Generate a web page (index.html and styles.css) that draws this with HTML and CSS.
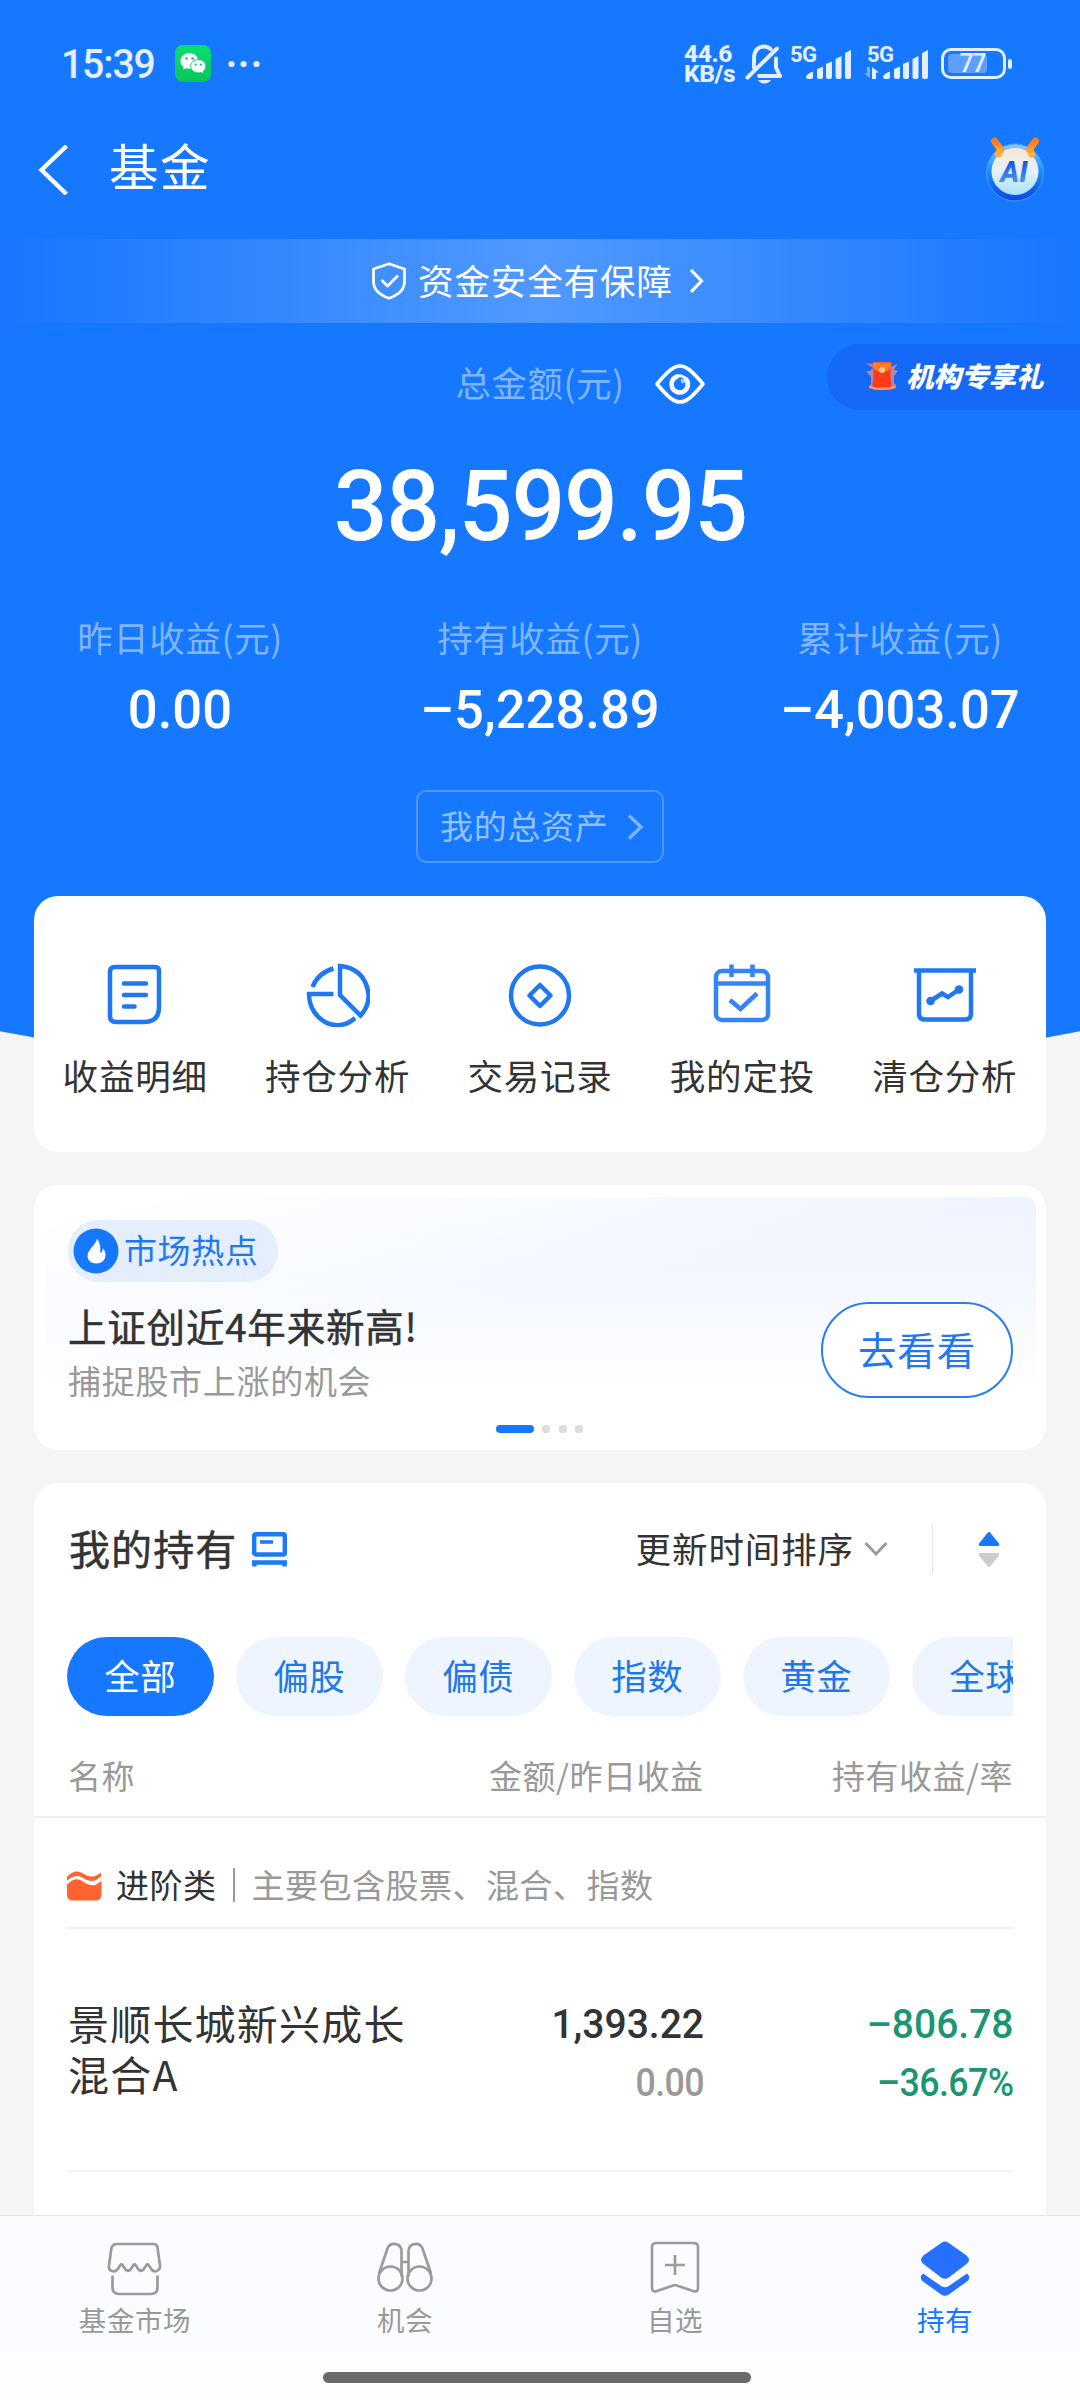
FILE: index.html
```html
<!DOCTYPE html>
<html lang="zh-CN">
<head>
<meta charset="utf-8">
<title>基金</title>
<link rel="stylesheet" href="styles.css">
</head>
<body>
<div class="page">
  <div class="content">
    <header class="status">
      <span class="clock">15:39</span>
      <svg class="wechat" width="36" height="37" viewBox="0 0 36 37">
        <defs><linearGradient id="wx" x1="0" y1="0" x2="0" y2="1"><stop offset="0" stop-color="#06e06f"/><stop offset="1" stop-color="#08c45c"/></linearGradient></defs>
        <rect width="36" height="37" rx="8" fill="url(#wx)"/>
        <path fill="#fff" d="M14.5 8C9.500 8 5.500 11.500 5.500 16c0 2.500 1.200 4.600 3.200 6l-.6 2.600 3.200-1.400c1 .3 2 .5 3.200.5 5 0 9-3.500 9-7.700S19.500 8 14.500 8z"/>
        <path fill="#fff" stroke="#07d065" stroke-width="1" d="M23.300 14.500c-4.300 0-7.600 3-7.600 6.700s3.300 6.700 7.600 6.700c1 0 1.900-.1 2.700-.4l2.600 1.300-.5-2.300c1.700-1.200 2.800-3.100 2.800-5.300 0-3.700-3.300-6.700-7.600-6.700z"/>
        <g fill="#07c860"><circle cx="11.500" cy="13.500" r="1.300"/><circle cx="17.600" cy="13.500" r="1.300"/><circle cx="20.600" cy="19.600" r="1.100"/><circle cx="25.800" cy="19.600" r="1.100"/></g>
      </svg>
      <svg class="more" width="32" height="8" viewBox="0 0 32 8" fill="#e3efff"><circle cx="3.500" cy="4" r="3.100"/><circle cx="15.600" cy="4" r="3.100"/><circle cx="28.500" cy="4" r="3.100"/></svg>
      <span class="speed"><span>44.6</span><span>KB/s</span></span>
      <svg class="bell" width="38" height="41" viewBox="0 0 38 41" fill="none" stroke="#e3efff" stroke-width="4" stroke-linecap="round" stroke-linejoin="round">
        <path d="M2.500 34.500L32 5.500"/><path d="M9 24.500V15C9 7.500 13.500 3.500 19 3.500c2.800 0 5 1 6.500 2.500"/><path d="M31 15.500v9l4 8.500H14"/>
        <path d="M13 37h13c-1.500 2.300-3.600 3.500-6.500 3.500S14.500 39.300 13 37z" fill="#e3efff" stroke="none"/>
      </svg>
      <span class="signal">
        <span class="net">5G</span>
        <svg width="46" height="30" viewBox="0 0 46 30" fill="#e3efff"><path d="M0 27q0-3 7-5.500V27q0 2-2 2H2q-2 0-2-2zM11 19l6-2.500V27q0 2-2 2h-2q-2 0-2-2zM20 14l6-2.500V27q0 2-2 2h-2q-2 0-2-2zM29.500 9l6-3v21q0 2-2 2h-2q-2 0-2-2zM39 3l6-3v27q0 2-2 2h-2q-2 0-2-2z"/></svg>
      </span>
      <span class="signal signal-two">
        <span class="net">5G</span>
        <svg class="updown" width="16" height="12" viewBox="0 0 16 12"><path d="M6 0v11L0 6h3V0z" fill="#79b1ff"/><path d="M8 12V0l7 5.500h-3V12z" fill="#e3efff"/></svg>
        <svg width="46" height="30" viewBox="0 0 46 30" fill="#e3efff"><path d="M0 27q0-3 7-5.500V27q0 2-2 2H2q-2 0-2-2zM11 19l6-2.500V27q0 2-2 2h-2q-2 0-2-2zM20 14l6-2.500V27q0 2-2 2h-2q-2 0-2-2zM29.500 9l6-3v21q0 2-2 2h-2q-2 0-2-2zM39 3l6-3v27q0 2-2 2h-2q-2 0-2-2z"/></svg>
      </span>
      <span class="battery"><span class="level">77</span></span>
      <span class="battery-tip"></span>
    </header>

    <nav class="nav">
      <svg class="back" width="30" height="50" viewBox="0 0 30 50" fill="none" stroke="#fff" stroke-width="4.400"><path d="M28.500 1L3.500 25l25 24"/></svg>
      <h1>基金</h1>
      <svg class="ai" width="60" height="66" viewBox="0 0 60 66">
        <defs>
          <linearGradient id="ring" x1="0" y1="0" x2="0" y2="1"><stop offset="0" stop-color="#8bd0ff"/><stop offset=".45" stop-color="#1e92f5"/><stop offset="1" stop-color="#0b44e8"/></linearGradient>
          <linearGradient id="face" x1="0" y1="0" x2="0" y2="1"><stop offset="0" stop-color="#fbe6cf"/><stop offset=".5" stop-color="#e6f1fb"/><stop offset="1" stop-color="#a5e2fb"/></linearGradient>
          <linearGradient id="horn" x1="0" y1="0" x2="0" y2="1"><stop offset="0" stop-color="#ff7a10"/><stop offset="1" stop-color="#ffb23c"/></linearGradient>
          <linearGradient id="ink" x1="0" y1="0" x2="0" y2="1"><stop offset=".2" stop-color="#1558e0"/><stop offset="1" stop-color="#58a8f5"/></linearGradient>
        </defs>
        <circle cx="30" cy="35.500" r="28.500" fill="url(#ring)" stroke="#4b9cff" stroke-width="1"/>
        <circle cx="30" cy="34.500" r="23.500" fill="url(#face)"/>
        <path d="M9.500 4l6 8.500L13.500 17M50.500 4l-6 8.500L46.500 17" fill="none" stroke="url(#horn)" stroke-width="7" stroke-linecap="round" stroke-linejoin="round"/>
        <text x="29" y="45" class="ai-text" fill="url(#ink)">AI</text>
      </svg>
    </nav>

    <div class="safety">
      <svg width="36" height="38" viewBox="0 0 36 38" fill="none" stroke="#fff" stroke-width="2.800" stroke-linejoin="round"><path d="M18 1.700L33.500 7v12.500c0 7.500-6 13.500-15.500 16.800C8.500 33 2.500 27 2.500 19.500V7z"/><path d="M10.500 18l6 6L27 13.500"/></svg>
      <span>资金安全有保障</span>
      <svg class="arrow" width="15" height="26" viewBox="0 0 15 26" fill="none" stroke="#fff" stroke-width="3.200"><path d="M2 2l10.500 11L2 24"/></svg>
    </div>

    <div class="total">
      <span class="total-label">总金额(元)</span>
      <div class="total-side">
        <svg class="eye" width="50" height="40" viewBox="0 0 50 40" fill="none" stroke="#fff" stroke-width="3.600" stroke-linejoin="round"><path d="M2 20C7 14 11.500 9 16 5.500Q25 -1.500 34 5.500C38.500 9 43 14 48 20 43 26 38.500 31 34 34.500Q25 41.500 16 34.500C11.500 31 7 26 2 20z"/><path d="M22 12.500a8.200 8.200 0 1 0 9.500 3.200" stroke-width="4.600" stroke-linecap="round"/><path d="M22 12.200a8.200 8.200 0 0 1 9.500 3.500" stroke-width="3"/><circle cx="28" cy="17" r="2.400" fill="#fff" stroke="none" opacity=".6"/></svg>
        <div class="gift">
          <svg width="34" height="30" viewBox="0 0 34 30"><path d="M1 2l7 5-3 3-4 0 5 6v7l-2 2v2l6 2h15l6-2v-3l-2-2v-7l4-5-4-1 3-6-6 3z" fill="#d8909a" opacity=".8"/><path d="M9 1h16q2 0 1.500 3-2 9 0 19 0 3-2 3H9.500q-2.500 0-2-3 2-10 0-19Q7 1 9 1z" fill="#ff3a1a"/><path d="M8 1.500h18q2 8.500-9 9.500-11-1-9-9.500z" fill="#ff7d2c"/><circle cx="17" cy="9" r="3" fill="#ffc587"/><path d="M4 25q13 4 26 0v2q-13 4-26 0z" fill="#ff9466"/></svg>
          <span>机构专享礼</span>
        </div>
      </div>
    </div>

    <div class="amount"><span>38,599.95</span></div>

    <div class="stats">
      <div><span class="stat-label">昨日收益(元)</span><span class="stat-value">0.00</span></div>
      <div><span class="stat-label">持有收益(元)</span><span class="stat-value">–5,228.89</span></div>
      <div><span class="stat-label">累计收益(元)</span><span class="stat-value">–4,003.07</span></div>
    </div>

    <div class="assets">
      <span>我的总资产</span>
      <svg width="17" height="26" viewBox="0 0 17 26" fill="none" stroke="#80b5ff" stroke-width="3.400"><path d="M2 1.500L14 13 2 24.500"/></svg>
    </div>

    <section class="card menu">
      <div>
        <svg width="64" height="64" viewBox="0 0 64 64"><path d="M12 4h40q4 0 4 4v36q0 15-15 15H13q-6 0-6-6V9q0-5 5-5z"/><path d="M21 20.500h22M21 32h22M21 43.500h10.500" stroke-linecap="round"/></svg>
        <span>收益明细</span>
      </div>
      <div>
        <svg width="64" height="64" viewBox="0 0 64 64"><path d="M34 3v29l20.500 20.500C63.500 42.500 64.500 31 59.500 20 55 10 45.500 4 34 3z"/><path d="M27.500 5.500C17 8.500 10 15 6.500 24M27.500 31H3c0 14 8 24.500 19 29.500 9 3 19 2 27-5.500"/></svg>
        <span>持仓分析</span>
      </div>
      <div>
        <svg width="64" height="64" viewBox="0 0 64 64"><circle cx="32" cy="32.500" r="29"/><path d="M32 22L42.500 32.500 32 43 21.500 32.500z" stroke-linejoin="round"/></svg>
        <span>交易记录</span>
      </div>
      <div class="plan">
        <svg width="64" height="64" viewBox="0 0 64 64"><rect x="6" y="8" width="52" height="49" rx="6"/><path d="M6 20.500h52M21.500 1.500v12.500M42.500 1.500v12.500M20 37l10.500 9L47 30.500"/></svg>
        <span>我的定投</span>
      </div>
      <div>
        <svg width="64" height="64" viewBox="0 0 64 64"><path d="M1 7.500h62M6 7.500v43q0 6 6 6h40q6 0 6-6v-43"/><path d="M17.500 38l11.500-7.500 6 3.500 11-7.500"/><circle cx="17.500" cy="38" r="4.300" class="dot"/><circle cx="46" cy="26.500" r="4.300" class="dot"/></svg>
        <span>清仓分析</span>
      </div>
    </section>

    <section class="card promo">
      <div class="promo-body">
        <div class="promo-text">
          <div class="hot">
            <svg width="46" height="46" viewBox="0 0 46 46"><circle cx="23" cy="23" r="22.500" fill="#1677ff"/><path d="M24 10.500c-.5 6-9.500 11-9.500 17.500 0 4.500 3.500 7.500 9 7.500s9-3.500 9-9c0-2.500-1-4.500-2.500-6-.3 2-1.200 3.500-3 4.500C28 19.500 27 14.500 24 10.500z" fill="#fff"/></svg>
            <span>市场热点</span>
          </div>
          <h2>上证创近4年来新高!</h2>
          <p>捕捉股市上涨的机会</p>
        </div>
        <div class="go">去看看</div>
      </div>
      <div class="pager"><i class="on"></i><i></i><i></i><i></i></div>
    </section>

    <section class="card holdings">
      <div class="head">
        <h2>我的持有</h2>
        <svg class="screen" width="35" height="35" viewBox="0 0 35 35" fill="none" stroke="#1a7af8" stroke-width="4.400"><rect x="2.200" y="2.200" width="30.600" height="20.300" rx="1.500"/><path d="M8 10h13" stroke-width="3.600"/><path d="M0 30.500h35M2.500 28.500v6M32.500 28.500v6"/></svg>
        <span class="sort">更新时间排序</span>
        <svg class="down" width="24" height="16" viewBox="0 0 24 16" fill="none" stroke="#999" stroke-width="2.800"><path d="M1.500 2L12 13 22.500 2"/></svg>
        <span class="rule"></span>
        <svg class="tri" width="22" height="35" viewBox="0 0 22 35"><path d="M11 0q.8 0 1.500.9l8.500 10.600q1 2.500-1.500 2.500h-17Q0 14 1 11.500L9.500.9Q10.200 0 11 0z" fill="#1677ff"/><path d="M11 35q.8 0 1.500-.9L21 23.500q1-2.500-1.500-2.500h-17Q0 21 1 23.500l8.500 10.600q.7.900 1.500.9z" fill="#ccc"/></svg>
      </div>
      <div class="chips"><span class="active">全部</span><span>偏股</span><span>偏债</span><span>指数</span><span>黄金</span><span>全球</span></div>
      <div class="cols labels"><span>名称</span><span>金额/昨日收益</span><span>持有收益/率</span></div>
      <div class="group">
        <svg width="35" height="31" viewBox="0 0 36 31"><path d="M0 14.500C7 8 11 7.500 18 12.500c6 4 11 4 17.500-2V25q0 6-6 6H6q-6 0-6-6z" fill="#ff6430"/><path d="M0 6.500C7-.5 12 0 18 4c6 3.500 11 3 17-2v4c-6 6-11.500 6-18 2C11.500 4.500 7 4.500 0 10.500z" fill="#ff6430"/></svg>
        <b>进阶类</b><i></i><span>主要包含股票、混合、指数</span>
      </div>
      <div class="cols fund">
        <span class="name">景顺长城新兴成长混合A</span>
        <span class="num"><b>1,393.22</b><em>0.00</em></span>
        <span class="num loss"><b>–806.78</b><em>–36.67%</em></span>
      </div>
    </section>
  </div>

  <footer class="tabs">
    <div class="tab-row">
      <div>
        <svg width="56" height="58" viewBox="0 0 56 58"><path d="M9.500 4h37q3.500 0 4 3.500l2.500 18c.5 5.500-5.500 7.500-8.500 4l-3-4.500q-1-1.500-2 0l-3 4.500q-2.500 2.500-5 0l-3-4.500q-1-1.500-2 0l-3 4.500q-2.500 2.500-5 0l-3-4.500q-1-1.500-2 0l-3 4.500c-3.500 3.500-9.500 1.500-8.500-4l2.500-18Q6 4 9.500 4z" stroke-linejoin="round"/><path d="M5.500 35.500v12q0 6.500 6.500 6.500h32q6.500 0 6.500-6.500v-12"/></svg>
        <span>基金市场</span>
      </div>
      <div>
        <svg width="56" height="58" viewBox="0 0 56 58"><circle cx="13.500" cy="38.500" r="12"/><circle cx="42.500" cy="38.500" r="12"/><path d="M2 33.500L10.500 8.500c3-7 13.500-5.500 14 2v26M54 33.500L45.500 8.500c-3-7-13.500-5.500-14 2v26M24.500 22h7"/></svg>
        <span>机会</span>
      </div>
      <div>
        <svg width="56" height="58" viewBox="0 0 56 58"><path d="M9.500 3h37q4.500 0 4.500 4V48c0 3.500-2.500 4-5 3L29 45.200q-1-.3-2 0L10 51C7.500 52 5 51.500 5 48V7q0-4 4.500-4z"/><path d="M28 15v20M18 25h20"/></svg>
        <span>自选</span>
      </div>
      <div class="current">
        <svg width="56" height="58" viewBox="0 0 56 58"><path d="M24.500 2.700Q28 .5 31.500 2.700L49.500 15.500q5 4.500 0 8.500L31.500 37.700Q28 40 24.500 37.700L6.500 24q-5-4 0-8.500z"/><path d="M6 33.500l18.500 12.700q3.500 2 7 0L50 33.500q4.500 4 0 8L31.500 54.700q-3.500 2.300-7 0L6 41.500q-4.500-4 0-8z"/></svg>
        <span>持有</span>
      </div>
    </div>
    <div class="home"></div>
  </footer>
</div>
</body>
</html>
```
FILE: styles.css
```css
* { box-sizing: border-box; margin: 0; padding: 0; }
body { width: 1080px; height: 2400px; overflow: hidden; background: #f5f5f5; color: #333; font-family: "Noto Sans CJK SC", sans-serif; font-weight: 400; }
svg { display: block; flex: none; }
h1, h2, b { font-weight: 400; }
i, em { font-style: normal; }
span, b, h1, h2, p { white-space: nowrap; }

.page { position: relative; display: flex; flex-direction: column; height: 2400px; isolation: isolate; }
.page::before { content: ""; position: absolute; inset: 0 0 auto; height: 1090px; z-index: -1; background: #1677ff; clip-path: circle(2840px at 540px -1757px); }
.content { flex: 1; min-height: 0; overflow: hidden; }

/* status bar */
.status { display: flex; align-items: center; height: 127px; padding-left: 61px; color: #e3efff; font-family: Roboto, sans-serif; }
.clock { width: 114px; font-size: 41px; font-weight: 500; letter-spacing: -1.2px; transform: scaleX(.955); transform-origin: left; }
.more { margin-left: 17px; }
.speed { display: flex; flex-direction: column; width: 51px; margin-left: 424px; font-size: 24.500px; line-height: 20px; font-weight: 800; letter-spacing: -.4px; }
.bell { margin-left: 10px; }
.signal { display: flex; align-items: flex-end; width: 62px; height: 33px; margin: -1px 0 0 7px; }
.signal .net { align-self: flex-start; width: 16px; font-size: 22px; line-height: 16px; font-weight: 700; letter-spacing: -.5px; }
.signal-two { width: 62px; margin-left: 14px; }
.signal-two .net { width: 0; margin-left: 1px; }
.signal-two .updown { margin: 0 3px 1px -3px; }
.battery { display: flex; width: 65px; height: 31px; margin-left: 13px; padding: 3px 4px; border: 3px solid #e3efff; border-radius: 10px; }
.level { width: 39px; border-radius: 4px; background: #5c9fff; font-size: 25px; line-height: 19px; font-weight: 500; text-align: right; padding-right: 2px; letter-spacing: -1.500px; }
.battery-tip { width: 4px; height: 10px; margin-left: 2px; border-radius: 2px; background: #e3efff; }

.nav { display: flex; align-items: center; height: 86px; padding: 0 35px 0 38px; color: #fff; }
.nav h1 { flex: 1; margin: -10px 0 0 41px; font-size: 49.500px; line-height: 70px; letter-spacing: 1.500px; }
.ai-text { font: italic 800 29px Roboto, sans-serif; text-anchor: middle; }

.safety { display: flex; align-items: center; height: 84px; margin-top: 26px; padding-left: 371px; background: linear-gradient(90deg, transparent, rgba(255,255,255,.25) 50%, transparent); color: #fff; font-size: 35.500px; letter-spacing: .9px; }
.safety span { margin: -4px 0 0 11px; }
.safety .arrow { margin-left: 16px; }

.total { display: grid; grid-template-columns: 1fr auto 1fr; height: 66px; margin-top: 21px; }
.total-label { grid-column: 2; padding-top: 12px; line-height: 52px; font-size: 35.500px; letter-spacing: .5px; color: #80b5ff; }
.total-side { display: flex; justify-content: space-between; }
.eye { margin: 20px 0 0 30px; }
.gift { display: flex; align-items: center; width: 253px; padding: 0 0 2px 38px; border-radius: 33px 0 0 33px; background: #1668f6; color: #fff; }
.gift span { margin: -2px 0 0 7px; font-size: 27.500px; font-weight: 800; font-style: italic; }

.amount { height: 110px; margin-top: 42px; text-align: center; color: #fff; font: 500 98px/110px Roboto, sans-serif; letter-spacing: -1.300px; }
.amount span { display: inline-block; transform: translateX(.6px) scaleX(.967); }

.stats { display: grid; grid-template-columns: repeat(3, 1fr); margin-top: 50px; text-align: center; color: #fff; }
.stats div { display: flex; flex-direction: column; }
.stat-label { line-height: 50px; font-size: 35.500px; letter-spacing: .6px; color: #80b5ff; }
.stat-value { margin-top: 17px; font: 500 54.500px/60px Roboto, sans-serif; transform: scaleX(.965); }

.assets { display: flex; align-items: center; width: 248px; height: 73px; margin: 51px auto 0; padding-left: 22px; border: 2px solid #5098ff; border-radius: 10px; font-size: 33px; letter-spacing: .7px; color: #94c1ff; }
.assets span { margin-top: -4px; }
.assets svg { margin-left: 18px; }

.card { margin: 33px 34px 0; border-radius: 24px; background: #fff; }
.menu { display: grid; grid-template-columns: repeat(5, 1fr); height: 256px; margin-top: 33px; padding-top: 67px; }
.menu div { display: flex; flex-direction: column; align-items: center; }
.menu svg { fill: none; stroke: #1f78f2; stroke-width: 4.500px; }
.menu .plan svg { stroke: #3484f8; }
.menu .dot { fill: #1f78f2; stroke: none; }
.menu span { margin-top: 23px; font-size: 35.500px; line-height: 50px; letter-spacing: .8px; }

.promo { display: flex; flex-direction: column; height: 265px; padding: 12px 10px 0 12px; }
.promo-body { display: flex; justify-content: space-between; height: 215px; padding: 23px 23px 0 22px; border-radius: 10px; background: linear-gradient(to bottom right, #fff 5%, transparent 50%), linear-gradient(180deg, #eff5ff 0, #f3f7ff 40%, #fff 90%); }
.hot { display: flex; align-items: center; width: 210px; height: 62px; padding-left: 5px; border-radius: 31px; background: #e4eefd; color: #1f78f2; font-size: 33px; letter-spacing: .6px; }
.hot span { margin: -4px 0 0 5px; }
.promo h2 { margin-top: 16px; line-height: 54px; font-size: 38.500px; letter-spacing: .8px; -webkit-text-stroke: .5px; }
.promo p { line-height: 50px; margin-top: 3px; font-size: 33px; letter-spacing: .7px; color: #999; }
.go { width: 192px; height: 96px; margin-top: 82px; border: 2px solid #2b7dea; border-radius: 48px; background: #fff; color: #1f78f2; font-size: 38.500px; line-height: 89px; letter-spacing: .8px; text-align: center; }
.pager { display: flex; justify-content: center; gap: 8.500px; margin: 13px 3px 0 0; }
.pager i { width: 8px; height: 8px; border-radius: 3px; background: #ddd; }
.pager .on { width: 38px; background: #1677ff; border-radius: 4px; }

.holdings { height: 760px; border-radius: 24px 24px 0 0; }
.head { display: flex; align-items: center; height: 100px; padding: 32px 46px 0 35px; }
.head h2 { margin-top: -4px; font-size: 41px; letter-spacing: 1.100px; -webkit-text-stroke: .5px; }
.screen { margin-left: 15px; }
.sort { margin: -4px 0 0 auto; font-size: 35.500px; letter-spacing: .9px; }
.down { margin-left: 10px; }
.rule { width: 1px; height: 50px; margin: 0 45px 0 44px; background: #e5e5e5; }
.chips { display: flex; gap: 22.500px; height: 79px; margin: 54px 33px 0; overflow: hidden; font-size: 35.500px; line-height: 76px; letter-spacing: .6px; }
.chips span { flex: none; width: 146.500px; border-radius: 40px; background: #eef5ff; color: #1f78e8; text-align: center; }
.chips .active { background: #1677ff; color: #fff; }
.cols { display: grid; grid-template-columns: 1fr 261px 309.500px; padding: 0 33px 0 34px; }
.cols span + span { text-align: right; }
.labels { height: 102px; padding-top: 34px; line-height: 50px; border-bottom: 2px solid #eee; font-size: 33px; letter-spacing: .5px; color: #999; }
.group { display: flex; align-items: center; height: 111px; margin: 0 33px; padding-top: 25px; border-bottom: 2px solid #eee; font-size: 33px; letter-spacing: .5px; }
.group b { margin: -2px 0 0 14px; }
.group i { width: 2px; height: 34px; margin: 0 17px 0 16px; background: #999; }
.group span { margin-top: -2px; color: #999; }
.fund { position: relative; height: 243px; padding-top: 68px; }
.fund::after { content: ""; position: absolute; inset: auto 33px 0; height: 2px; background: #f5f5f5; }
.fund .name { width: 350px; white-space: normal; font-size: 41px; line-height: 50.500px; letter-spacing: 1.200px; }
.num { display: flex; flex-direction: column; padding-top: 2px; font-family: Roboto, sans-serif; transform: scaleX(.94); transform-origin: right; }
.num b { font-size: 41.500px; line-height: 50px; font-weight: 500; }
.num em { margin-top: 9px; font-size: 38px; line-height: 50px; font-weight: 500; color: #999; letter-spacing: -.6px; }
.loss, .loss em { color: #1a9673; }

.tabs { height: 185px; border-top: 1px solid #e6e8eb; background: #fefefe; }
.tab-row { display: grid; grid-template-columns: repeat(4, 1fr); height: 138px; padding-top: 24px; background: #fafcff; color: #999; }
.tab-row div { display: flex; flex-direction: column; align-items: center; }
.tab-row svg { fill: none; stroke: #9b9b9b; stroke-width: 2.700px; }
.tab-row span { margin-top: 1px; font-size: 27.500px; line-height: 40px; letter-spacing: .6px; }
.tab-row .current { color: #1677ff; }
.tab-row .current svg { fill: #2670ff; stroke: none; }
.home { width: 428px; height: 11px; margin: 18px 0 0 323px; border-radius: 6px; background: #6a6a6a; }
```
